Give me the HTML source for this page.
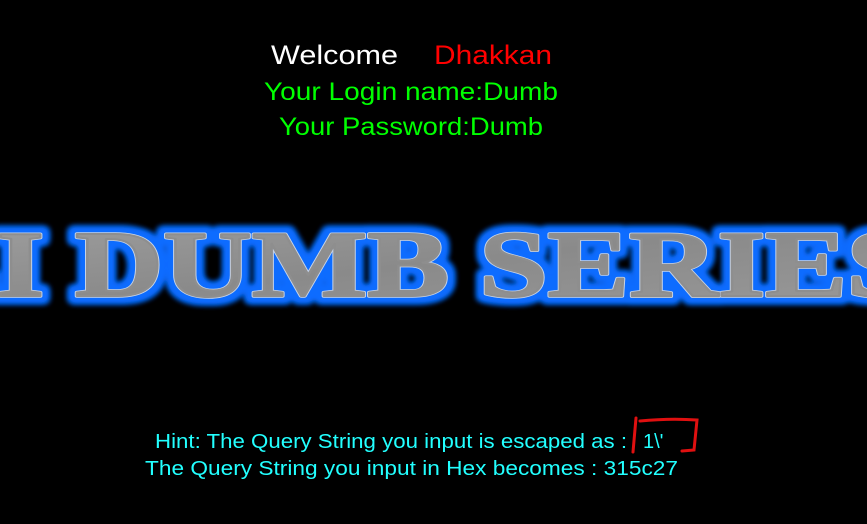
<!DOCTYPE html>
<html><head><meta charset="utf-8"><style>
html,body{margin:0;padding:0;background:#000;width:867px;height:524px;overflow:hidden}
svg{display:block}
</style></head><body>
<svg width="867" height="524" viewBox="0 0 867 524" xmlns="http://www.w3.org/2000/svg">
<defs>
<linearGradient id="g" x1="0" y1="0" x2="1" y2="1">
<stop offset="0" stop-color="#a0a0a0"/><stop offset="0.5" stop-color="#8a8a8a"/><stop offset="1" stop-color="#9a9a9a"/>
</linearGradient>
<filter id="glow" x="-10%" y="-40%" width="120%" height="180%">
<feMorphology in="SourceAlpha" operator="dilate" radius="3" result="d"/>
<feGaussianBlur in="d" stdDeviation="3" result="b"/>
<feFlood flood-color="#0a6cff"/>
<feComposite in2="b" operator="in" result="c"/>
<feMerge><feMergeNode in="c"/><feMergeNode in="c"/><feMergeNode in="SourceGraphic"/></feMerge>
</filter>
</defs>
<g font-family="Liberation Sans, sans-serif">
<text x="271" y="64" font-size="27" fill="#fff" textLength="127" lengthAdjust="spacingAndGlyphs">Welcome</text>
<text x="434" y="64" font-size="27" fill="#ff0000" textLength="118" lengthAdjust="spacingAndGlyphs">Dhakkan</text>
<text x="264" y="100" font-size="25" fill="#00ff00" textLength="294" lengthAdjust="spacingAndGlyphs">Your Login name:Dumb</text>
<text x="279" y="135" font-size="25" fill="#00ff00" textLength="264" lengthAdjust="spacingAndGlyphs">Your Password:Dumb</text>
<text x="155" y="448" font-size="20" fill="#22ffff" textLength="472" lengthAdjust="spacingAndGlyphs">Hint: The Query String you input is escaped as :</text>
<text x="643" y="448" font-size="20" fill="#22ffff">1\'</text>
<text x="145" y="475" font-size="20" fill="#22ffff" textLength="533" lengthAdjust="spacingAndGlyphs">The Query String you input in Hex becomes : 315c27</text>
</g>
<g filter="url(#glow)">
<text x="-85" y="296" font-family="Liberation Serif, serif" font-weight="bold" font-size="94" fill="url(#g)" stroke="#0a6cff" stroke-width="9" stroke-linejoin="round" textLength="1000" lengthAdjust="spacingAndGlyphs">LI DUMB SERIES</text>
<text x="-85" y="296" font-family="Liberation Serif, serif" font-weight="bold" font-size="94" fill="url(#g)" stroke="#c8d4e8" stroke-width="3.5" stroke-linejoin="round" textLength="1000" lengthAdjust="spacingAndGlyphs">LI DUMB SERIES</text>
<text x="-85" y="296" font-family="Liberation Serif, serif" font-weight="bold" font-size="94" fill="url(#g)" stroke="#8e8e8e" stroke-width="2" stroke-linejoin="round" textLength="1000" lengthAdjust="spacingAndGlyphs">LI DUMB SERIES</text>
</g>
<path d="M636 418 L633 452 M640 421 Q670 418 697 420 L694 450 L682 451" fill="none" stroke="#e01010" stroke-width="3" stroke-linecap="round"/>
</svg>
</body></html>
